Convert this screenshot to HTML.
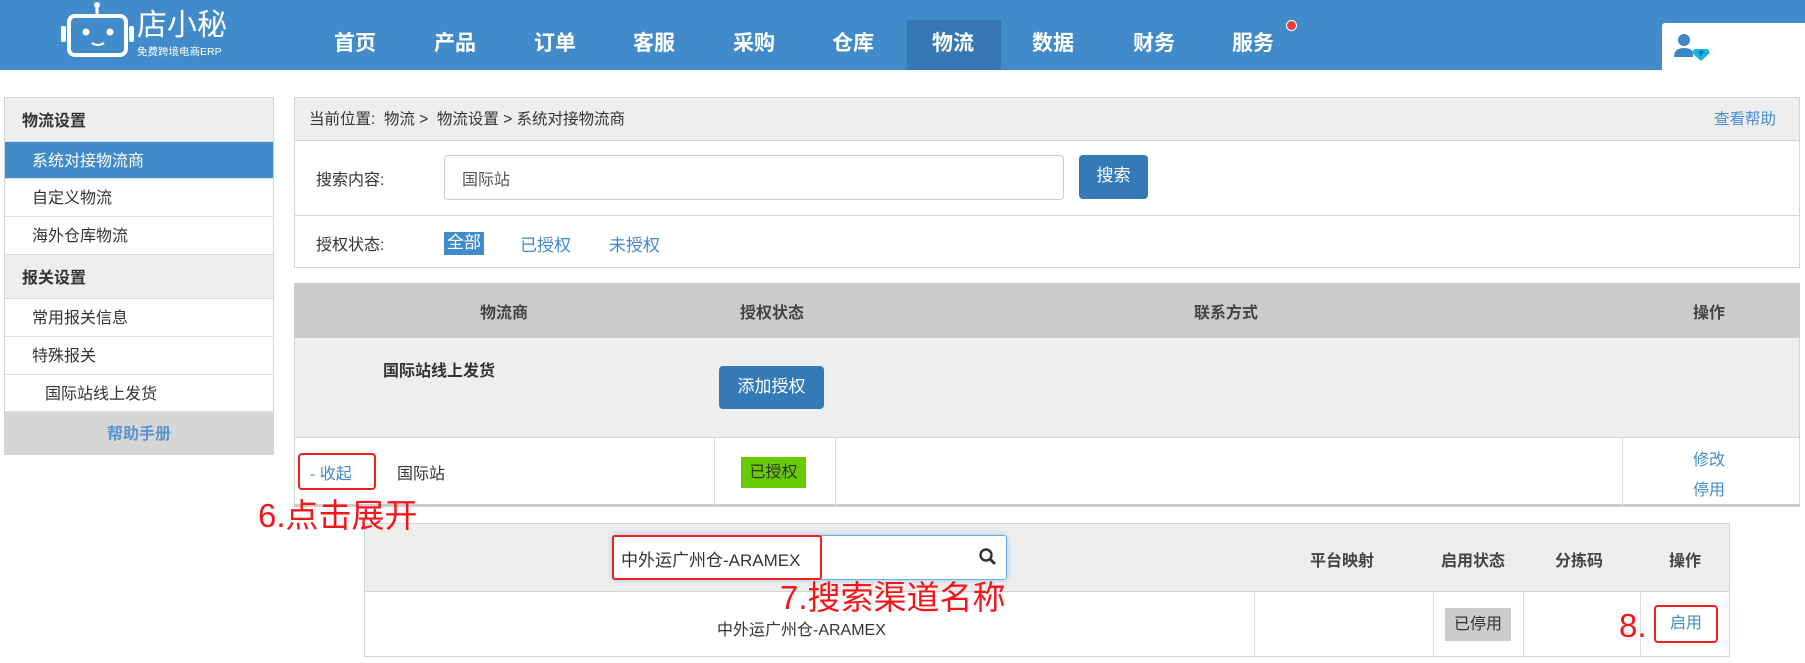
<!DOCTYPE html>
<html><head><meta charset="utf-8"><style>
*{margin:0;padding:0;box-sizing:border-box}
body{width:1805px;height:663px;overflow:hidden;background:#fff;font-family:"Liberation Sans","Noto Sans CJK SC",sans-serif;color:#333;position:relative;font-size:16px}
.a{position:absolute}
.hdr{left:0;top:0;width:1805px;height:70px;background:#418bca}
.nav{top:30px;color:#fff;font-size:21px;font-weight:bold;line-height:28px}
.side{left:4px;top:97px;width:270px;height:358px;border:1px solid #d5d5d5;border-top:none}
.row{position:absolute;left:0;width:268px;border-top:1px solid #ddd;font-size:16px}
.red{color:#f5161b;font-size:33px;line-height:36px;z-index:5}
.blue{color:#428bca}
</style></head><body>
<div class="a hdr"></div>
<svg class="a" style="left:58px;top:0" width="80" height="60" viewBox="0 0 80 60">
<circle cx="39" cy="5" r="3" fill="#fff"/><rect x="37.5" y="6" width="3" height="10" fill="#fff"/>
<rect x="11" y="16" width="57" height="39" rx="6" fill="none" stroke="#fff" stroke-width="4"/>
<rect x="3" y="26" width="5" height="16" rx="2" fill="#fff"/><rect x="71" y="26" width="5" height="16" rx="2" fill="#fff"/>
<circle cx="28" cy="32" r="3.5" fill="#fff"/><circle cx="52" cy="32" r="3.5" fill="#fff"/>
<path d="M34 43 Q40 47 46 43" stroke="#fff" stroke-width="2" fill="none"/></svg>
<div class="a" style="left:137px;top:10px;color:#fff;font-size:30px;line-height:32px">店小秘</div>
<div class="a" style="left:137px;top:46px;color:#fff;font-size:10.5px;line-height:12px">免费跨境电商ERP</div>
<div class="a" style="left:907px;top:20px;width:94px;height:50px;background:#3578b4"></div>
<div class="a nav" style="left:334px">首页</div>
<div class="a nav" style="left:434px">产品</div>
<div class="a nav" style="left:534px">订单</div>
<div class="a nav" style="left:633px">客服</div>
<div class="a nav" style="left:733px">采购</div>
<div class="a nav" style="left:832px">仓库</div>
<div class="a nav" style="left:932px">物流</div>
<div class="a nav" style="left:1032px">数据</div>
<div class="a nav" style="left:1133px">财务</div>
<div class="a nav" style="left:1232px">服务</div>
<div class="a" style="left:1286px;top:20px;width:11px;height:11px;border-radius:50%;background:#e83e3e;border:1px solid #fff"></div>
<div class="a" style="left:1662px;top:23px;width:143px;height:47px;background:#fff;border-radius:3px 0 0 0"></div>
<svg class="a" style="left:1674px;top:33px" width="38" height="28" viewBox="0 0 38 28"><circle cx="10" cy="7" r="6" fill="#3f86c6"/><path d="M0 24 Q0 15 10 15 Q17 15 19 19 L19 24 Z" fill="#3f86c6"/><path d="M20 16 L34 16 L36 20 L27 28 L18 20 Z" fill="#17b8d6"/><path d="M24 18 L30 18 L27 24Z" fill="#1f6ed8"/></svg>

<div class="a side">
<div class="row" style="top:0;height:44px;background:#eee;border-top:1px solid #d5d5d5;font-weight:bold;padding:9px 0 0 17px">物流设置</div>
<div class="row" style="top:44px;height:37px;background:#428bca;color:#fff;padding:5px 0 0 27px">系统对接物流商</div>
<div class="row" style="top:81px;height:38px;padding:5px 0 0 27px">自定义物流</div>
<div class="row" style="top:119px;height:38px;padding:5px 0 0 27px">海外仓库物流</div>
<div class="row" style="top:157px;height:44px;background:#eee;font-weight:bold;padding:9px 0 0 17px">报关设置</div>
<div class="row" style="top:201px;height:38px;padding:5px 0 0 27px">常用报关信息</div>
<div class="row" style="top:239px;height:38px;padding:5px 0 0 27px">特殊报关</div>
<div class="row" style="top:277px;height:37px;padding:5px 0 0 40px">国际站线上发货</div>
<div class="row" style="top:314px;height:44px;background:#d6d6d6;font-weight:bold;color:#5a95cf;text-align:center;padding-top:8px">帮助手册</div>
</div>

<div class="a" style="left:294px;top:97px;width:1506px;height:171px;border:1px solid #d5d5d5"></div>
<div class="a" style="left:295px;top:98px;width:1504px;height:43px;background:#eee;border-bottom:1px solid #d5d5d5"></div>
<div class="a" style="left:309px;top:107px;font-size:15.5px">当前位置:&nbsp; 物流 &gt;&nbsp; 物流设置 &gt; 系统对接物流商</div>
<div class="a blue" style="left:1714px;top:107px;font-size:15.5px;color:#4a90d0">查看帮助</div>
<div class="a" style="left:316px;top:166px">搜索内容:</div>
<div class="a" style="left:444px;top:155px;width:620px;height:45px;border:1px solid #ccc;border-radius:4px;padding:10px 0 0 17px;color:#555">国际站</div>
<div class="a" style="left:1079px;top:155px;width:69px;height:44px;background:#337ab7;border-radius:4px;color:#fff;text-align:center;line-height:42px;font-size:17px">搜索</div>
<div class="a" style="left:295px;top:215px;width:1504px;border-top:1px solid #d5d5d5"></div>
<div class="a" style="left:316px;top:231px">授权状态:</div>
<div class="a" style="left:444px;top:232px;width:40px;height:23px;background:#428bca;color:#fff;text-align:center;line-height:22px;font-size:17px">全部</div>
<div class="a blue" style="left:520px;top:231px;font-size:17px">已授权</div>
<div class="a blue" style="left:609px;top:231px;font-size:17px">未授权</div>

<div class="a" style="left:294px;top:283px;width:1506px;height:224px;border:1px solid #d5d5d5;border-bottom:3px solid #ccc"></div>
<div class="a" style="left:294px;top:283px;width:1506px;height:55px;background:#cbcbcb"></div>
<div class="a" style="left:480px;top:299px;font-weight:bold;color:#444">物流商</div>
<div class="a" style="left:740px;top:299px;font-weight:bold;color:#444">授权状态</div>
<div class="a" style="left:1194px;top:299px;font-weight:bold;color:#444">联系方式</div>
<div class="a" style="left:1693px;top:299px;font-weight:bold;color:#444">操作</div>
<div class="a" style="left:295px;top:338px;width:1504px;height:100px;background:#eee;border-bottom:1px solid #d5d5d5"></div>
<div class="a" style="left:383px;top:357px;font-weight:bold;color:#333">国际站线上发货</div>
<div class="a" style="left:719px;top:366px;width:105px;height:43px;background:#337ab7;border-radius:4px;color:#fff;text-align:center;line-height:42px;font-size:17px">添加授权</div>
<div class="a" style="left:714px;top:438px;height:69px;border-left:1px solid #ddd"></div>
<div class="a" style="left:835px;top:438px;height:69px;border-left:1px solid #ddd"></div>
<div class="a" style="left:1622px;top:438px;height:69px;border-left:1px solid #ddd"></div>
<div class="a" style="left:298px;top:453px;width:78px;height:37px;border:2px solid #f02020;border-radius:4px"></div>
<div class="a blue" style="left:310px;top:460px">- 收起</div>
<div class="a" style="left:397px;top:460px">国际站</div>
<div class="a" style="left:741px;top:457px;width:65px;height:31px;background:#66cc00;text-align:center;line-height:31px">已授权</div>
<div class="a blue" style="left:1693px;top:446px">修改</div>
<div class="a blue" style="left:1693px;top:476px">停用</div>

<div class="a" style="left:364px;top:523px;width:1366px;height:134px;border:1px solid #d5d5d5"></div>
<div class="a" style="left:365px;top:524px;width:1364px;height:68px;background:#eee;border-bottom:1px solid #d5d5d5"></div>
<div class="a" style="left:612px;top:535px;width:395px;height:45px;background:#fff;border:1px solid #66afe9;border-radius:3px;box-shadow:0 0 6px rgba(102,175,233,.6)"></div>
<div class="a" style="left:612px;top:535px;width:210px;height:45px;border:2px solid #f02020;border-radius:3px"></div>
<div class="a" style="left:621px;top:546px;font-size:17px;color:#333">中外运广州仓-ARAMEX</div>
<svg class="a" style="left:979px;top:548px" width="18" height="18" viewBox="0 0 18 18"><circle cx="7" cy="7" r="5.5" stroke="#333" stroke-width="2.4" fill="none"/><path d="M11 11 L16 16" stroke="#333" stroke-width="2.8"/></svg>
<div class="a" style="left:1310px;top:547px;font-weight:bold;color:#444">平台映射</div>
<div class="a" style="left:1441px;top:547px;font-weight:bold;color:#444">启用状态</div>
<div class="a" style="left:1555px;top:547px;font-weight:bold;color:#444">分拣码</div>
<div class="a" style="left:1669px;top:547px;font-weight:bold;color:#444">操作</div>
<div class="a" style="left:1254px;top:592px;height:65px;border-left:1px solid #ddd"></div>
<div class="a" style="left:1433px;top:592px;height:65px;border-left:1px solid #ddd"></div>
<div class="a" style="left:1523px;top:592px;height:65px;border-left:1px solid #ddd"></div>
<div class="a" style="left:1640px;top:592px;height:65px;border-left:1px solid #ddd"></div>
<div class="a" style="left:717px;top:616px;font-size:16px">中外运广州仓-ARAMEX</div>
<div class="a" style="left:1445px;top:608px;width:66px;height:33px;background:#ccc;text-align:center;line-height:33px">已停用</div>
<div class="a" style="left:1654px;top:605px;width:64px;height:38px;border:2px solid #f02020;border-radius:4px;text-align:center;line-height:34px;color:#428bca">启用</div>
<div class="a red" style="left:258px;top:498px">6.点击展开</div>
<div class="a red" style="left:1619px;top:608px">8.</div>
<div class="a red" style="left:780px;top:580px">7.搜索渠道名称</div>
</body></html>
